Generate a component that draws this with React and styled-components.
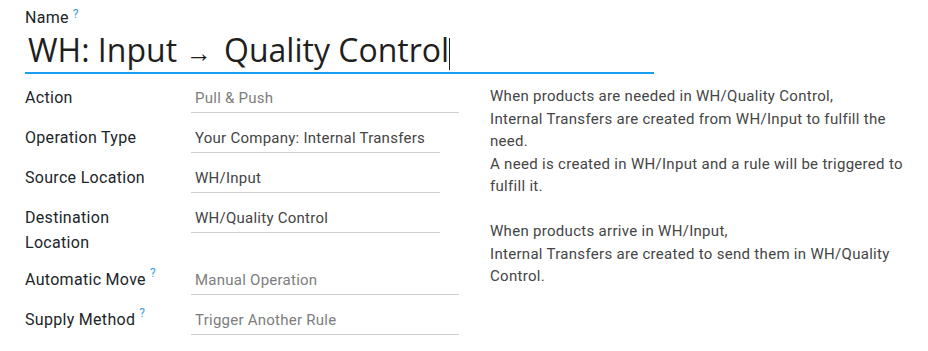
import React from "react";
import styled, { createGlobalStyle } from "styled-components";

const GlobalStyle = createGlobalStyle`
  html, body {
    margin: 0;
    padding: 0;
    background: #ffffff;
  }
  body {
    font-family: Roboto, "Noto Sans", Arial, sans-serif;
    color: #212529;
  }
`;

const Sheet = styled.div`
  width: 928px;
  height: 351px;
  box-sizing: border-box;
  padding: 8px 0 0 25px;
  overflow: hidden;
`;

const NameLabel = styled.div`
  font-size: 16px;
  letter-spacing: 0.3px;
  line-height: 20px;
  color: #212529;
`;

const Help = styled.sup`
  color: #3a9ee4;
  font-size: 12px;
  line-height: 0;
  letter-spacing: 0;
  margin-left: 4px;
  vertical-align: top;
  position: relative;
  top: 6px;
`;

const TitleInput = styled.div`
  margin-top: 2px;
  width: 629px;
  box-sizing: border-box;
  padding: 0 3px;
  font-family: "Open Sans", "Noto Sans", sans-serif;
  font-size: 32px;
  line-height: 40px;
  color: #1f1f1f;
  border-bottom: 2px solid #1a9ff0;
  white-space: nowrap;
`;

const Arrow = styled.span`
  font-size: 26px;
  margin: 0 12px 0 9px;
`;

const Caret = styled.span`
  display: inline-block;
  width: 1px;
  height: 32px;
  background: #1f1f1f;
  vertical-align: -8px;
`;

const Body = styled.div`
  margin-top: 11px;
  display: flex;
  gap: 31px;
`;

const Grid = styled.div`
  display: grid;
  grid-template-columns: 166px 268px;
  row-gap: 12px;
  align-items: start;
`;

const Label = styled.div`
  font-size: 16px;
  letter-spacing: 0.3px;
  line-height: 25px;
  color: #212529;
`;

const Field = styled.div`
  width: ${(p) => (p.$narrow ? "249px" : "268px")};
  box-sizing: border-box;
  padding: 2px 4px 3px;
  font-size: 15px;
  letter-spacing: 0.25px;
  line-height: 22px;
  color: ${(p) => (p.$muted ? "#7d7d7d" : "#444444")};
  border-bottom: 1px solid #cfcfcf;
`;

const Note = styled.div`
  font-size: 15px;
  letter-spacing: 0.3px;
  line-height: 22.5px;
  color: #454545;
`;

const Gap = styled.div`
  height: 22.5px;
`;

const rows = [
  { label: "Action", value: "Pull & Push", muted: true },
  { label: "Operation Type", value: "Your Company: Internal Transfers", narrow: true },
  { label: "Source Location", value: "WH/Input", narrow: true },
  { label: "Destination Location", value: "WH/Quality Control", narrow: true, wrap: true },
  { label: "Automatic Move", value: "Manual Operation", muted: true, help: true },
  { label: "Supply Method", value: "Trigger Another Rule", muted: true, help: true },
];

export default function App() {
  return (
    <>
      <GlobalStyle />
      <Sheet>
        <NameLabel>
          Name<Help>?</Help>
        </NameLabel>
        <TitleInput>
          WH: Input<Arrow>→</Arrow>Quality Control<Caret />
        </TitleInput>
        <Body>
          <Grid>
            {rows.map((r) => (
              <React.Fragment key={r.label}>
                <Label>
                  {r.wrap ? (
                    <>
                      Destination
                      <br />
                      Location
                    </>
                  ) : (
                    r.label
                  )}
                  {r.help && <Help>?</Help>}
                </Label>
                <Field $narrow={r.narrow} $muted={r.muted}>
                  {r.value}
                </Field>
              </React.Fragment>
            ))}
          </Grid>
          <Note>
            When products are needed in WH/Quality Control,
            <br />
            Internal Transfers are created from WH/Input to fulfill the
            <br />
            need.
            <br />
            A need is created in WH/Input and a rule will be triggered to
            <br />
            fulfill it.
            <Gap />
            When products arrive in WH/Input,
            <br />
            Internal Transfers are created to send them in WH/Quality
            <br />
            Control.
          </Note>
        </Body>
      </Sheet>
    </>
  );
}
